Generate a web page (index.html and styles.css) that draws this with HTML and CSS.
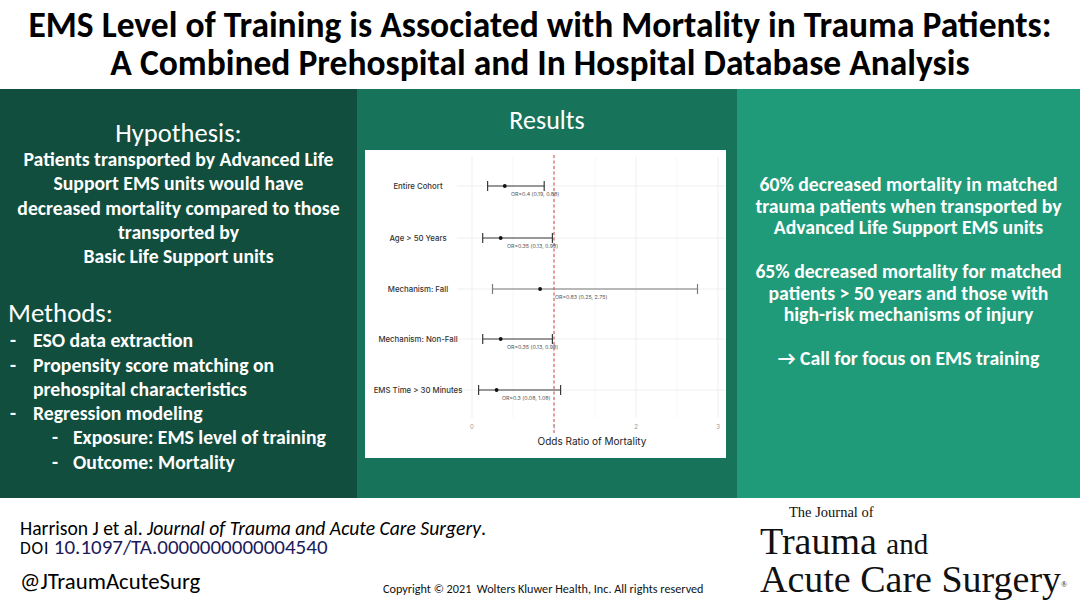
FILE: index.html
```html
<!DOCTYPE html>
<html lang="en">
<head>
<meta charset="utf-8">
<title>EMS Level of Training</title>
<link rel="stylesheet" href="styles.css">
</head>
<body>
<h1 class="title">EMS Level of Training is Associated with Mortality in Trauma Patients:<br>A Combined Prehospital and In Hospital Database Analysis</h1>
<main class="panels">
  <section class="panel panel-left">
    <h2 class="hyp-title">Hypothesis:</h2>
    <p class="hyp-body">Patients transported by Advanced Life<br>Support EMS units would have<br>decreased mortality compared to those<br>transported by<br>Basic Life Support units</p>
    <h2 class="methods-title">Methods:</h2>
    <ul class="methods-list">
      <li><span class="dash">-</span><span>ESO data extraction</span></li>
      <li><span class="dash">-</span><span>Propensity score matching on<br>prehospital characteristics</span></li>
      <li><span class="dash">-</span><span>Regression modeling</span></li>
      <li class="sub"><span class="dash">-</span><span>Exposure: EMS level of training</span></li>
      <li class="sub"><span class="dash">-</span><span>Outcome: Mortality</span></li>
    </ul>
  </section>
  <section class="panel panel-mid">
    <h2 class="results-title">Results</h2>
    <div class="chart">
      <svg width="361" height="308" viewBox="0 0 361 308" xmlns="http://www.w3.org/2000/svg">
        <g class="grid-minor">
          <line x1="148" y1="7" x2="148" y2="268"/>
          <line x1="230" y1="7" x2="230" y2="268"/>
          <line x1="312" y1="7" x2="312" y2="268"/>
        </g>
        <g class="grid-major">
          <line x1="107" y1="7" x2="107" y2="268"/>
          <line x1="189" y1="7" x2="189" y2="268"/>
          <line x1="271" y1="7" x2="271" y2="268"/>
          <line x1="353" y1="7" x2="353" y2="268"/>
          <line x1="92" y1="36" x2="361" y2="36"/>
          <line x1="92" y1="88" x2="361" y2="88"/>
          <line x1="92" y1="139" x2="361" y2="139"/>
          <line x1="92" y1="189" x2="361" y2="189"/>
          <line x1="92" y1="240" x2="361" y2="240"/>
        </g>
        <g class="row-labels">
          <text x="53" y="38.8">Entire Cohort</text>
          <text x="53" y="90.8">Age &gt; 50 Years</text>
          <text x="53" y="141.8">Mechanism: Fall</text>
          <text x="53" y="191.8">Mechanism: Non-Fall</text>
          <text x="53" y="242.8">EMS Time &gt; 30 Minutes</text>
        </g>
        <g class="ci">
          <line x1="122.6" y1="36" x2="179.2" y2="36"/>
          <line x1="122.6" y1="31" x2="122.6" y2="41"/>
          <line x1="179.2" y1="31" x2="179.2" y2="41"/>
          <line x1="117.7" y1="88" x2="187.4" y2="88"/>
          <line x1="117.7" y1="83" x2="117.7" y2="93"/>
          <line x1="187.4" y1="83" x2="187.4" y2="93"/>
          <line x1="117.7" y1="189" x2="187.4" y2="189"/>
          <line x1="117.7" y1="184" x2="117.7" y2="194"/>
          <line x1="187.4" y1="184" x2="187.4" y2="194"/>
          <line x1="113.6" y1="240" x2="195.6" y2="240"/>
          <line x1="113.6" y1="235" x2="113.6" y2="245"/>
          <line x1="195.6" y1="235" x2="195.6" y2="245"/>
        </g>
        <g class="ci ci-light">
          <line x1="127.5" y1="139" x2="332.5" y2="139"/>
          <line x1="127.5" y1="134" x2="127.5" y2="144"/>
          <line x1="332.5" y1="134" x2="332.5" y2="144"/>
        </g>
        <g class="pts">
          <circle cx="139.8" cy="36" r="1.9"/>
          <circle cx="135.7" cy="88" r="1.9"/>
          <circle cx="175.1" cy="139" r="1.9"/>
          <circle cx="135.7" cy="189" r="1.9"/>
          <circle cx="131.6" cy="240" r="1.9"/>
        </g>
        <line class="ref" x1="189" y1="5" x2="189" y2="284"/>
        <g class="or-labels">
          <text x="146" y="46">OR=0.4 (0.19, 0.88)</text>
          <text x="142" y="98">OR=0.35 (0.13, 0.98)</text>
          <text x="190" y="149">OR=0.83 (0.25, 2.75)</text>
          <text x="142" y="199">OR=0.35 (0.13, 0.98)</text>
          <text x="137" y="250">OR=0.3 (0.08, 1.08)</text>
        </g>
        <g class="ticks">
          <text x="107" y="279">0</text>
          <text x="189" y="279">1</text>
          <text x="271" y="279">2</text>
          <text x="353" y="279">3</text>
        </g>
        <text class="axis-title" x="227" y="295">Odds Ratio of Mortality</text>
      </svg>
    </div>
  </section>
  <section class="panel panel-right">
    <p>60% decreased mortality in matched<br>trauma patients when transported by<br>Advanced Life Support EMS units</p>
    <p>65% decreased mortality for matched<br>patients &gt; 50 years and those with<br>high-risk mechanisms of injury</p>
    <p>&#8594; Call for focus on EMS training</p>
  </section>
</main>
<footer class="footer">
  <div class="foot-left">
    <p class="cite">Harrison J et al. <em>Journal of Trauma and Acute Care Surgery</em>.</p>
    <p class="doi-line"><span class="doi-label">DOI</span> <span class="doi">10.1097/TA.0000000000004540</span></p>
    <div class="foot-bottom">
      <p class="handle">@JTraumAcuteSurg</p>
      <p class="copyright">Copyright © 2021&nbsp; Wolters Kluwer Health, Inc. All rights reserved</p>
    </div>
  </div>
  <div class="logo">
    <div class="logo-small">The Journal of</div>
    <div class="logo-big">Trauma <span class="logo-and">and</span></div>
    <div class="logo-big">Acute Care Surgery<sup class="reg">®</sup></div>
  </div>
</footer>
</body>
</html>
```
FILE: styles.css
```css
* { box-sizing: border-box; }
html, body { margin: 0; padding: 0; }
body {
  width: 1080px;
  height: 608px;
  overflow: hidden;
  background: #ffffff;
  color: #000000;
  font-family: Carlito, Lato, "Open Sans", sans-serif;
}
p, h1, h2, ul { margin: 0; }

.title {
  height: 89px;
  padding-top: 6px;
  text-align: center;
  font-weight: 700;
  font-size: 35.5px;
  line-height: 38px;
  white-space: nowrap;
}

.panels {
  display: grid;
  grid-template-columns: 357px 380px 343px;
  height: 409px;
}
.panel { color: #ffffff; }

.panel-left { background: #124e3d; padding-top: 30px; }
.hyp-title {
  text-align: center;
  font-weight: 400;
  font-size: 26.5px;
  line-height: 28px;
}
.hyp-body {
  text-align: center;
  font-weight: 700;
  font-size: 19.7px;
  line-height: 24.3px;
  white-space: nowrap;
}
.methods-title {
  margin: 30px 0 0 8px;
  font-weight: 400;
  font-size: 26.8px;
  line-height: 30px;
}
.methods-list {
  list-style: none;
  padding: 0 0 0 10px;
  font-weight: 700;
  font-size: 19.7px;
  line-height: 24.2px;
  white-space: nowrap;
}
.methods-list li { display: flex; }
.methods-list .dash { flex: none; width: 23px; }
.methods-list .sub { padding-left: 42px; }
.methods-list .sub .dash { width: 21px; }

.panel-mid { background: #17745a; padding-top: 16px; }
.results-title {
  text-align: center;
  font-weight: 400;
  font-size: 26px;
  line-height: 30px;
}
.chart {
  margin: 15px 0 0 8px;
  width: 361px;
  height: 308px;
  background: #ffffff;
}
.chart svg { display: block; }
.grid-major line { stroke: #ebebeb; stroke-width: 0.8; }
.grid-minor line { stroke: #f5f5f5; stroke-width: 0.8; }
.ci line { stroke: #3a3a3a; stroke-width: 1.2; }
.ci-light line { stroke: #7a7a7a; }
.pts circle { fill: #111111; }
.ref { stroke: #d9534f; stroke-width: 1.1; stroke-dasharray: 3 2.5; }
.row-labels text {
  font-family: Inter, "DejaVu Sans", sans-serif;
  font-size: 7.8px;
  font-weight: 500;
  fill: #333333;
  text-anchor: middle;
}
.or-labels text {
  font-family: Inter, "DejaVu Sans", sans-serif;
  font-size: 5.3px;
  fill: #555555;
}
.ticks text {
  font-family: Inter, "DejaVu Sans", sans-serif;
  font-size: 6px;
  fill: #9a9a9a;
  text-anchor: middle;
}
.axis-title {
  font-family: Inter, "DejaVu Sans", sans-serif;
  font-size: 10px;
  fill: #222222;
  text-anchor: middle;
}

.panel-right {
  background: #1f9b79;
  padding-top: 85px;
  text-align: center;
  font-weight: 700;
  font-size: 19.7px;
  line-height: 21.7px;
  white-space: nowrap;
}
.panel-right p + p { margin-top: 21.7px; }

.footer {
  display: grid;
  grid-template-columns: 760px 320px;
  height: 110px;
}
.foot-left { padding: 22px 0 0 20px; }
.cite { font-size: 19.6px; line-height: 17px; white-space: nowrap; }
.doi-line { margin-top: 2px; font-size: 20.5px; line-height: 17px; white-space: nowrap; }
.doi-label { font-size: 17.5px; letter-spacing: 0.8px; }
.doi { color: #1b1a5c; font-size: 21px; }
.foot-bottom {
  display: grid;
  grid-template-columns: 363px auto;
  margin-top: 12px;
}
.handle { font-size: 22.8px; line-height: 24px; }
.copyright {
  margin-top: 13px;
  font-size: 12.2px;
  line-height: 14px;
  color: #111111;
  white-space: nowrap;
}

.logo {
  padding-top: 7px;
  font-family: "Liberation Serif", "Times New Roman", serif;
  color: #111111;
}
.logo-small { margin-left: 29px; font-size: 14.5px; line-height: 15px; }
.logo-big { margin-top: 4px; font-size: 38px; line-height: 35px; white-space: nowrap; }
.logo-big + .logo-big { margin-top: 0; }
.logo-and { font-size: 29px; }
.reg { font-size: 8px; vertical-align: top; position: relative; top: 5px; }
```
